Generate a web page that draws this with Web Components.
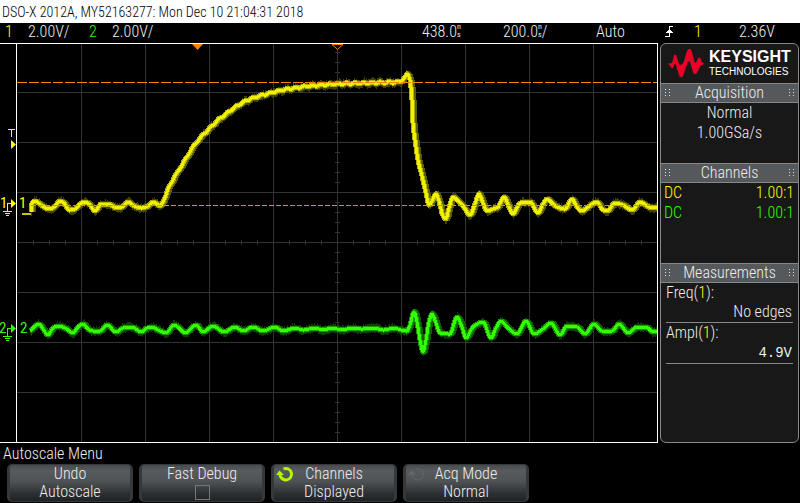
<!DOCTYPE html>
<html lang="en">
<head>
<meta charset="utf-8">
<title>DSO-X 2012A</title>
<style>
  html, body { margin: 0; background: #000; }
  body { font: 300 16px/20px "Roboto Condensed", Roboto, "Liberation Sans", sans-serif; color: #eee; }
</style>
</head>
<body>
<scope-screen></scope-screen>
<script>
const define = (name, html, setup) => {
  const template = document.createElement('template');
  template.innerHTML = html;
  customElements.define(name, class extends HTMLElement {
    connectedCallback() {
      if (this.shadowRoot) return;
      this.attachShadow({ mode: 'open' }).append(template.content.cloneNode(true));
      if (setup) setup(this, this.shadowRoot);
    }
  });
};

define('scope-title', `
<style>
  :host { display: block; background: #fff; color: #000; height: 23px; }
  h1 { margin: 0; padding-left: 2px; font-size: 14px; line-height: 24px; font-weight: 300; }
</style>
<h1><slot></slot></h1>`);

define('time-value', `
<style>
  :host { display: inline-flex; }
  .unit { display: grid; grid-template-rows: 8px 8px; font: 400 8px/8px "Roboto Condensed", Roboto, sans-serif; }
</style>
<slot></slot><span class="unit"><span>n</span><span>s</span></span><slot name="after"></slot>`);

define('status-bar', `
<style>
  :host { display: grid; grid-template-columns: 23px 61px 23px 1fr 81px 93px 69px 29px 45px 61px; padding-left: 5px; height: 20px; line-height: 18px; background: #000; }
  .y { color: #ff0; } .g { color: #3f0; }
  svg { display: block; margin-top: 3px; }
</style>
<span class="y">1</span><span>2.00V/</span><span class="g">2</span><span>2.00V/</span>
<time-value>438.0</time-value>
<time-value>200.0<span slot="after">/</span></time-value>
<span>Auto</span>
<svg width="9" height="11" viewBox="0 0 9 11" fill="none" stroke="#fff" shape-rendering="crispEdges"><path d="M0 10.5H4.5V.5H8M1 6.5H8M2 5.500H7M3 4.500H6"/></svg>
<span class="y">1</span><span>2.36V</span>`);

define('scope-display', `
<style>
  :host { display: block; background: #000; }
  svg { display: block; width: 100%; height: auto; }
  text { font: 400 15px "Roboto Condensed", Roboto, sans-serif; }
</style>
<svg viewBox="0 43 658 400" role="img" aria-label="Waveform display">
  <g id="grid" stroke="#333" shape-rendering="crispEdges" fill="none"></g>
  <g id="traces" fill="none" stroke-linejoin="round"></g>
  <g stroke="#ff8000" shape-rendering="crispEdges">
    <path d="M17 82.500H657" stroke-dasharray="10 2"/>
    <path d="M31 205.500H657" stroke-dasharray="5 2"/>
  </g>
  <path d="M0 43.500H657.500V442.500H0M16.500 43V443" fill="none" stroke="#fff" shape-rendering="crispEdges"/>
  <path d="M192 44H203L197.500 50Z" fill="#ff8000"/>
  <path d="M332 44.500H343L337.500 49.500Z" fill="#000" stroke="#ff8000"/>
  <g fill="#ff0">
    <path d="M8 129H15V130H12V137H11V130H8Z" shape-rendering="crispEdges"/>
    <path d="M11 140V149L16 144.500Z"/>
    <text x="0" y="208">1</text><text x="19" y="208">1</text>
    <path d="M11 199V208L16 203.500Z"/>
    <path d="M11 203.500H7.500V211M3 211.500H12M5 213.500H10M6 215.500H9" fill="none" stroke="#ff0" shape-rendering="crispEdges"/>
  </g>
  <g fill="#3f0">
    <text x="-1" y="333">2</text><text x="20" y="333">2</text>
    <path d="M11 324V333L16 328.500Z"/>
    <path d="M11 328.500H7.500V336M3 336.500H12M5 338.500H10M6 340.500H9" fill="none" stroke="#3f0" shape-rendering="crispEdges"/>
  </g>
</svg>`, (host, root) => {
  const NS = 'http://www.w3.org/2000/svg';
  const add = (parent, attrs) => {
    const p = document.createElementNS(NS, 'path');
    for (const k in attrs) p.setAttribute(k, attrs[k]);
    parent.append(p);
  };
  let d = '';
  for (let x = 81.5; x < 600; x += 64) d += `M${x} 44V442`;
  for (let y = 92.5; y < 400; y += 50) d += `M17 ${y}H657`;
  for (let y = 52.5; y < 440; y += 10) d += `M335 ${y}h5`;
  for (let x = 33.5; x < 657; x += 16) d += `M${x} 240v5`;
  add(root.getElementById('grid'), { d });

  const sample = (pts, ripple) => {
    const out = [];
    let i = 0;
    const slope = k => {
      if (k < 1 || k > pts.length - 2) return 0;
      const a = (pts[k][1] - pts[k-1][1]) / (pts[k][0] - pts[k-1][0]);
      const b = (pts[k+1][1] - pts[k][1]) / (pts[k+1][0] - pts[k][0]);
      return a * b <= 0 ? 0 : 2 * a * b / (a + b);
    };
    for (let x = pts[0][0]; x <= pts[pts.length-1][0]; x++) {
      while (i < pts.length - 2 && x > pts[i+1][0]) i++;
      const [x0, y0] = pts[i], [x1, y1] = pts[i+1], h = x1 - x0, t = (x - x0) / h;
      const y = y0*(2*t**3-3*t*t+1) + h*slope(i)*(t**3-2*t*t+t) + y1*(3*t*t-2*t**3) + h*slope(i+1)*(t**3-t*t);
      out.push([x, y + ripple(x)]);
    }
    return out;
  };
  const draw = (pts, ripple, halo, mid, core) => {
    const g = root.getElementById('traces');
    const line = sample(pts, ripple);
    const path = (dx, dy) => 'M' + line.map(([x, y]) => `${Math.min(657, x + dx)} ${(y + dy).toFixed(1)}`).join('L');
    let fuzz = '', seed = 7;
    for (const [x, y] of line) {
      seed = (seed * 73 + 41) % 997;
      const r = seed % 4;
      fuzz += `M${Math.min(x, 656) + .5} ${Math.round(y) - 3 - r % 3}V${Math.round(y) + 4 + r % 2}`;
    }
    add(g, { d: fuzz, stroke: halo, 'stroke-opacity': '.7', 'shape-rendering': 'crispEdges' });
    add(g, { d: path(2, 0), stroke: halo, 'stroke-width': 5, 'shape-rendering': 'crispEdges' });
    add(g, { d: path(0, 0), stroke: mid, 'stroke-width': 5, 'shape-rendering': 'crispEdges' });
    add(g, { d: path(0, 0), stroke: core, 'stroke-width': 3, 'shape-rendering': 'crispEdges' });
  };
  const yellow = [[31,212],[32,203],[35,201],[41,205],[49,209],[54,207],[60,201],[64,203],[69,210],[75,209],[80,204],[85,202],[89,204],[95,211],[101,204],[108,204],[117,208],[122,207],[128,202],[134,206],[142,208],[148,206],[153,202],[157,204],[160,206],[163,202],[170,185],[177,173],[185,160],[193,147],[202,136],[209,129],[217,121],[226,114],[237,106],[250,99],[263,95],[283,90],[310,86],[337,84],[367,83],[400,82],[405,77],[407,74],[410,80],[412,100],[413,123],[416,147],[418,160],[422,176],[426,193],[429,205],[432,201],[436,194],[439,201],[443,216],[446,219],[449,208],[453,197],[457,200],[463,206],[470,215],[475,204],[479,194],[483,203],[487,211],[493,209],[498,207],[504,197],[509,207],[513,214],[519,204],[524,202],[530,202],[538,213],[543,204],[547,199],[552,203],[557,207],[565,209],[572,199],[577,207],[582,211],[588,207],[597,202],[603,210],[607,211],[615,203],[623,205],[632,210],[640,202],[647,206],[652,208],[658,207]];
  const green = [[30,331],[34,327],[39,324],[43,329],[48,335],[53,328],[58,326],[65,328],[73,333],[78,327],[83,324],[88,329],[93,331],[100,331],[107,325],[116,332],[123,328],[132,327],[141,332],[147,328],[152,327],[158,330],[166,333],[174,325],[179,328],[185,333],[196,325],[203,332],[213,326],[224,332],[235,327],[243,331],[253,327],[263,331],[275,327],[283,331],[295,328],[303,330],[315,328],[323,330],[332,328],[342,330],[352,328],[362,329],[373,328],[384,330],[394,328],[401,330],[407,331],[410,325],[414,312],[417,322],[420,340],[423,352],[426,340],[429,322],[432,314],[436,323],[440,333],[450,334],[457,317],[462,327],[466,338],[473,327],[483,322],[491,338],[496,328],[501,321],[508,328],[517,334],[526,321],[534,334],[543,329],[551,323],[560,335],[567,326],[577,327],[585,334],[594,324],[602,331],[612,331],[619,324],[628,333],[637,327],[646,327],[653,332],[658,331]];
  add(root.getElementById('traces'), { d: 'M22 214H31', stroke: '#c8c800', 'stroke-width': 2 });
  draw(yellow, x => x > 165 && x < 400 ? .8 * Math.sin(x * Math.PI / 4.25) : 0, '#5c5c00', '#b0b000', '#f2f200');
  draw(green, () => 0, '#125c00', '#1a9a00', '#3f0');
});

define('keysight-logo', `
<style>
  :host { display: flex; align-items: flex-start; gap: 5px; height: 39px; padding-left: 7px; color: #fff; }
  svg { margin-top: 5px; }
  .words { display: grid; padding-top: 4px; font-family: "Liberation Sans", Arial, sans-serif; }
  b { font-size: 16px; line-height: 18px; font-weight: 700; }
  span { font-size: 10px; line-height: 12px; font-weight: 400; }
</style>
<svg width="36" height="29" viewBox="0 0 108 87" fill="#e90029" aria-hidden="true"><path d="M0 45 4 43H9C13 43 15 33 17 23C18 14 25 14 26 23L32 41C35 52 44 47 47 39C52 25 54 13 57 6C61-2 67-2 71 6L78 34C80 43 84 45 87 36C90 26 95 21 99 31C101 39 103 42 108 43L105 47C99 48 97 51 94 58L86 73C82 78 77 76 75 69L67 42C65 34 60 35 58 43L46 79C43 87 36 87 33 79L24 49C23 42 20 43 18 50C15 60 9 60 6 49Z"/></svg>
<div class="words"><b>KEYSIGHT</b><span>TECHNOLOGIES</span></div>`);

define('panel-section', `
<style>
  :host { display: block; }
  h2 { display: flex; justify-content: space-between; align-items: center; box-sizing: border-box; height: 20px; margin: 0; padding: 0 4px; font: inherit; line-height: 18px; background: #56595c; border: solid #858789; border-width: 1px 0; }
  .body { min-height: var(--body, 60px); }
</style>
<h2><svg width="5" height="8" viewBox="0 0 5 8" fill="#ddd"><path d="M0 0h1v1H0zM4 0h1v1H4zM0 3h1v1H0zM4 3h1v1H4zM0 6h1v1H0zM4 6h1v1H4z"/></svg><slot name="heading"></slot><svg width="5" height="8" viewBox="0 0 5 8" fill="#ddd"><path d="M0 0h1v1H0zM4 0h1v1H4zM0 3h1v1H0zM4 3h1v1H4zM0 6h1v1H0zM4 6h1v1H4z"/></svg></h2>
<div class="body"><slot></slot></div>`);

define('channel-row', `
<style>
  :host { display: flex; justify-content: space-between; padding: 0 4px 0 3px; line-height: 20px; }
</style>
<slot></slot><slot name="ratio"></slot>`);

define('measure-item', `
<style>
  :host { display: block; margin: 0 5px; border-bottom: 1px solid #858789; }
  .name { line-height: 19px; }
  .value { text-align: right; padding-right: 1px; line-height: 20px; }
  em { font-style: normal; color: #ff0; }
</style>
<div class="name"><slot name="name"></slot>(<em>1</em>):</div><div class="value"><slot></slot></div>`);

define('info-panel', `
<style>
  :host { display: block; box-sizing: border-box; margin: 0 1px 0 2px; background: #181818; border: 1px solid #858789; border-radius: 6px; overflow: hidden; }
  .center { text-align: center; line-height: 20px; }
  .y { color: #ff0; } .g { color: #3f0; }
  .mono { font: 14px "Liberation Mono", monospace; line-height: 19px; }
</style>
<keysight-logo></keysight-logo>
<panel-section><span slot="heading">Acquisition</span><div class="center">Normal</div><div class="center">1.00GSa/s</div></panel-section>
<panel-section style="--body: 80px"><span slot="heading">Channels</span>
<channel-row class="y">DC<span slot="ratio">1.00:1</span></channel-row><channel-row class="g">DC<span slot="ratio">1.00:1</span></channel-row></panel-section>
<panel-section><span slot="heading">Measurements</span>
<measure-item><span slot="name">Freq</span>No edges</measure-item>
<measure-item><span slot="name">Ampl</span><span class="mono">4.9V</span></measure-item></panel-section>`);

const keyStyle = `
  :host { display: block; }
  .key { box-sizing: border-box; width: 100%; height: 38px; margin: 0; padding: 0 2px; font: inherit; line-height: 18px; color: inherit; text-align: center;
    border: solid #36393c; border-width: 1px 3px; border-radius: 5px; background: linear-gradient(#484b4e, #585b5e 15%, #505356 45%, #2c2f32 80%, #202326); }`;

define('soft-key', `
<style>${keyStyle}
  .key { display: grid; grid-template-columns: 20px 1fr 20px; }
  .line { grid-column: 2; }
  svg { grid-row: 1 / 3; grid-column: 1; display: none; margin-top: 1px; color: #b4f800; }
  :host([knob]) svg { display: block; }
  :host([knob=off]) svg { color: #636669; }
</style>
<button type="button" class="key">
<svg width="18" height="16" viewBox="0 0 18 16" aria-hidden="true"><path d="M4 8A5.800 5.800 0 1 0 7.500 2.900" fill="none" stroke="currentColor" stroke-width="3"/><path d="M0 9 3.500 4.500 8 9Z" fill="currentColor"/></svg>
<span class="line" style="grid-row:1"><slot name="top"></slot></span><span class="line" style="grid-row:2"><slot name="bottom"></slot></span></button>`,
(host, root) => {
  if (host.getAttribute('knob') === 'off') root.querySelector('path').setAttribute('stroke-width', '1');
});

define('check-key', `
<style>${keyStyle}
  .key { display: flex; flex-direction: column; align-items: center; gap: 1px; }
  input { appearance: none; box-sizing: border-box; width: 15px; height: 15px; margin: 1px 0 0; border: 1px solid #777; border-radius: 0; }
  input:checked { background: #b4f800; }
</style>
<label class="key"><slot></slot><input type="checkbox"></label>`);

define('softkey-menu', `
<style>
  :host { display: block; padding-bottom: 1px; background: #000; }
  .name { padding-left: 3px; line-height: 21px; }
  .keys { display: grid; grid-template-columns: repeat(6, 1fr); gap: 6px; padding: 0 7px; }
</style>
<div class="name">Autoscale Menu</div>
<div class="keys">
<soft-key><span slot="top">Undo</span><span slot="bottom">Autoscale</span></soft-key>
<check-key>Fast Debug</check-key>
<soft-key knob="on"><span slot="top">Channels</span><span slot="bottom">Displayed</span></soft-key>
<soft-key knob="off"><span slot="top">Acq Mode</span><span slot="bottom">Normal</span></soft-key>
</div>`);

define('scope-screen', `
<style>
  :host { display: block; }
  main { display: grid; grid-template-columns: 1fr 142px; }
</style>
<scope-title>DSO-X 2012A, MY52163277: Mon Dec 10 21:04:31 2018</scope-title>
<status-bar></status-bar>
<main><scope-display></scope-display><info-panel></info-panel></main>
<softkey-menu></softkey-menu>`);
</script>
</body>
</html>
